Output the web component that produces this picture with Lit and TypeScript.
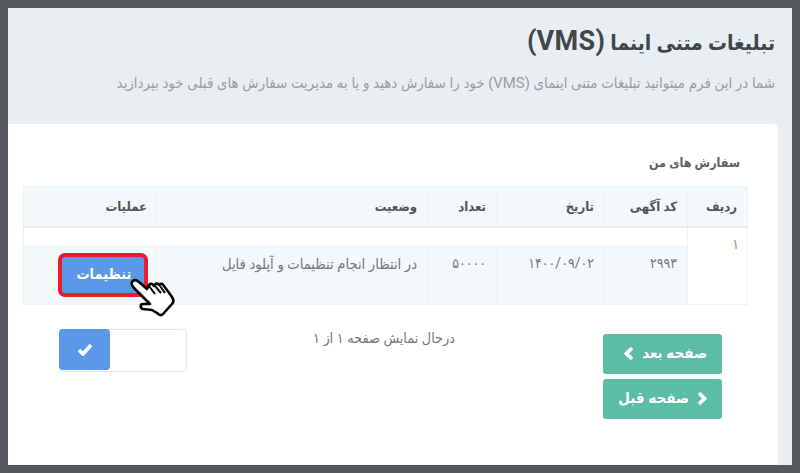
import { LitElement, html, css } from "lit";
import { customElement } from "lit/decorators.js";

@customElement("app-root")
export class AppRoot extends LitElement {
  static styles = css`
    :host { display: block; width: 800px; height: 473px; overflow: hidden; }
    * { box-sizing: border-box; }
    .frame { width: 800px; height: 473px; background: #54585c; padding: 8px; }
    .page {
      height: 457px; background: #e9eef2; direction: rtl; overflow: hidden;
      font-family: Roboto, "DejaVu Sans Condensed", "DejaVu Sans", sans-serif; color: #6d7075;
      padding-right: 14px;
    }
    .head { height: 116px; padding: 19px 3px 0 0; }
    h1 { margin: 0; font-size: 21px; line-height: 28px; font-weight: 700; color: #3f474e; white-space: nowrap; }
    h1 bdi { font-size: 27px; letter-spacing: 0.4px; }
    .sub { margin: 15px 0 0; font-size: 14.9px; line-height: 22px; color: #999da3; white-space: nowrap; }
    .card {
      height: 341px; background: #fff; border-top-right-radius: 5px;
      padding: 30px 30px 0 30px; position: relative;
    }
    h2 { margin: 0 0 14px; font-size: 12.5px; line-height: 18px; font-weight: 700; color: #5c6065; padding-right: 8px; letter-spacing: -0.3px; }
    .tbl { width: 724px; border-collapse: collapse; table-layout: fixed; font-size: 13px; }
    .tbl th, .tbl td { border: 1px solid #eef2f5; padding: 0 10px; text-align: right; vertical-align: top; }
    .tbl th { height: 40px; background: #f3f8fb; font-weight: 700; color: #50555a; vertical-align: middle; border-bottom: 2px solid #e9edf0; }
    .tbl th:last-child { padding-right: 8px; }
    .spacer td { height: 20px; background: #fff; }
    .row td { height: 58px; background: #f3f8fb; padding-top: 8px; color: #74777b; font-size: 14px; }
    .row td.state { font-size: 14.6px; }
    .row td.ops { padding: 0 0 2px 34px; vertical-align: middle; direction: ltr; text-align: left; }
    .tbl td.num { padding: 8px 8px 0 0; color: #7c9a70; background: #fff; font-size: 14px; }
    .cta {
      display: inline-flex; align-items: center; justify-content: center; width: 90px; height: 44px;
      background: #5b98e8; border: 4px solid #ec1c2e; border-radius: 7px; color: #fff;
      font-size: 14.5px; font-weight: 700; direction: rtl; padding-left: 2px;
    }
    .hand { position: absolute; left: 122px; top: 153px; width: 48px; height: 40px; }
    .foot { display: flex; padding-top: 29px; width: 724px; }
    .pager { width: 119px; margin-right: 26px; display: flex; flex-direction: column; gap: 5px; }
    .pbtn {
      height: 40px; background: #5cbda5; color: #fff; border-radius: 3px; display: flex; align-items: center;
      font-size: 15px; font-weight: 700; gap: 7px; padding: 0 15px 2px; white-space: nowrap;
    }
    .pbtn svg { width: 11px; height: 15px; flex: none; }
    .status { font-size: 14.3px; line-height: 18px; color: #74777b; margin-right: 148px; margin-top: -5px; white-space: nowrap; }
    .toggle {
      width: 128px; height: 43px; border: 1px solid #e6e8ea; border-radius: 4px; margin: -5px auto 0 35px;
      display: flex; direction: ltr; background: #fff;
    }
    .on { width: 51px; margin: -1px; height: 41px; background: #5b98e8; border-radius: 4px; display: flex; align-items: center; justify-content: center; }
    .on svg { width: 16px; height: 13px; }
  `;

  render() {
    return html`<div class="frame"><div class="page">
      <div class="head">
        <h1>تبلیغات متنی اینما <bdi>(VMS)</bdi></h1>
        <p class="sub">شما در این فرم میتوانید تبلیغات متنی اینمای (VMS) خود را سفارش دهید و یا به مدیریت سفارش های قبلی خود بپردازید</p>
      </div>
      <div class="card">
        <h2>سفارش های من</h2>
        <table class="tbl">
          <colgroup><col style="width:60px"><col style="width:83px"><col style="width:108px"><col style="width:69px"><col style="width:272px"><col style="width:132px"></colgroup>
          <thead><tr><th>ردیف</th><th>کد آگهی</th><th>تاریخ</th><th>تعداد</th><th>وضعیت</th><th>عملیات</th></tr></thead>
          <tbody>
            <tr class="spacer"><td class="num" rowspan="2">۱</td><td colspan="5"></td></tr>
            <tr class="row">
              <td>۲۹۹۳</td><td>۱۴۰۰/۰۹/۰۲</td><td>۵۰۰۰۰</td><td class="state">در انتظار انجام تنظیمات و آپلود فایل</td>
              <td class="ops"><span class="cta">تنظیمات</span></td>
            </tr>
          </tbody>
        </table>
        <div class="foot">
          <div class="pager">
            <div class="pbtn"><span>صفحه بعد</span><svg viewBox="0 0 11 15"><path d="M8 2L2.5 7.5 8 13" fill="none" stroke="#fff" stroke-width="3.8"/></svg></div>
            <div class="pbtn"><svg viewBox="0 0 11 15"><path d="M3 2l5.5 5.5L3 13" fill="none" stroke="#fff" stroke-width="3.8"/></svg><span>صفحه قبل</span></div>
          </div>
          <div class="status">درحال نمایش صفحه ۱ از ۱</div>
          <div class="toggle"><div class="on"><svg viewBox="0 0 16 13"><path d="M2 7l4 4 8-9" fill="none" stroke="#fff" stroke-width="3.8"/></svg></div></div>
        </div>
        <svg class="hand" viewBox="0 0 48 40">
          <path d="M2 5 C4 2 7 3 9 5 L17 12 L19 8 C21 6 23 7 24 9 C25 6 28 6 29 8 C31 6 33 7 34 9 L42 20 C44 23 44 25 42 27 L33 37 C31 39 29 38 27 36 L22 33 L13 32 C10 31 10 27 13 27 L20 27 L4 11 C2 9 1 7 2 5 Z" fill="#fff" stroke="#000" stroke-width="2.6" stroke-linejoin="round"/>
          <path d="M19 9l6 8M25 9l6 7M30 9l5 7" fill="none" stroke="#000" stroke-width="2"/>
        </svg>
      </div>
    </div></div>`;
  }
}
